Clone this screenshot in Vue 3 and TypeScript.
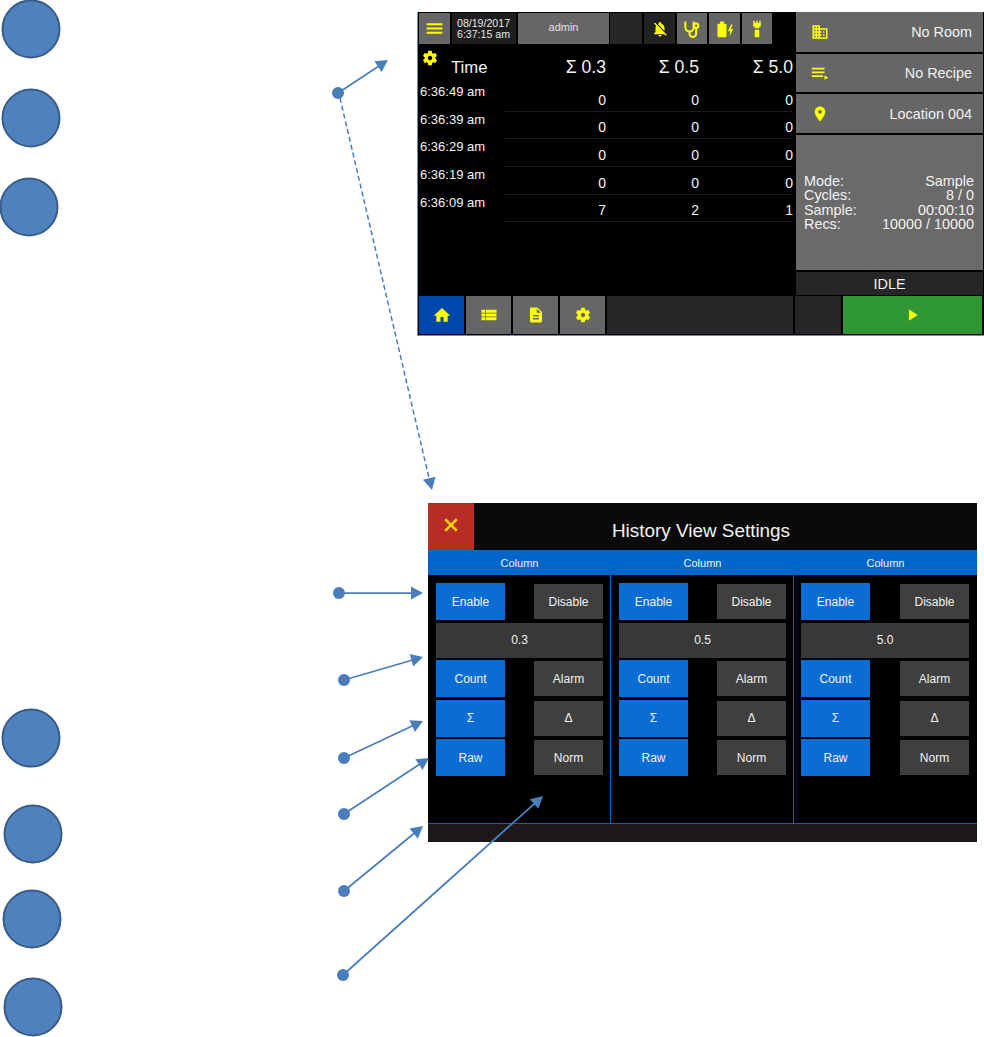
<script setup lang="ts">
type Arrow = { from: [number, number]; to: [number, number] };

const ICONS: Record<string, string> = {
  menu: "M3 18h18v-2.4H3V18zm0-4.8h18v-2.4H3v2.4zM3 6v2.4h18V6H3z",
  gear: "M19.14 12.94c.04-.3.06-.61.06-.94 0-.32-.02-.64-.07-.94l2.03-1.58c.18-.14.23-.41.12-.61l-1.92-3.32c-.12-.22-.37-.29-.59-.22l-2.39.96c-.5-.38-1.03-.7-1.62-.94l-.36-2.54c-.04-.24-.24-.41-.48-.41h-3.84c-.24 0-.43.17-.47.41l-.36 2.54c-.59.24-1.13.57-1.62.94l-2.39-.96c-.22-.08-.47 0-.59.22L2.74 8.87c-.12.21-.08.47.12.61l2.03 1.58c-.05.3-.09.63-.09.94s.02.64.07.94l-2.03 1.58c-.18.14-.23.41-.12.61l1.92 3.32c.12.22.37.29.59.22l2.39-.96c.5.38 1.03.7 1.62.94l.36 2.54c.05.24.24.41.48.41h3.84c.24 0 .44-.17.47-.41l.36-2.54c.59-.24 1.13-.56 1.62-.94l2.39.96c.22.08.47 0 .59-.22l1.92-3.32c.12-.22.07-.47-.12-.61l-2.01-1.58zM12 15c-1.65 0-3-1.35-3-3s1.35-3 3-3 3 1.35 3 3-1.35 3-3 3z",
  bell_off: "M20 18.69L7.84 6.14 5.27 3.49 4 4.76l2.8 2.8v.01c-.52.99-.8 2.16-.8 3.42v5l-2 2v1h13.73l2 2L21 19.72l-1-1.03zM12 22c1.11 0 2-.89 2-2h-4c0 1.11.89 2 2 2zm6-7.32V11c0-3.08-1.64-5.64-4.5-6.32V4c0-.83-.67-1.5-1.5-1.5s-1.5.67-1.5 1.5v.68c-.15.03-.29.08-.42.12-.1.03-.2.07-.3.11h-.01c-.2.08-.4.17-.59.27-.01 0-.01 0-.02.01L18 14.68z",
  battery: "M3 5h2.5V2h5v3H13a1 1 0 0 1 1 1v16a1 1 0 0 1-1 1H3a1 1 0 0 1-1-1V6a1 1 0 0 1 1-1zM20 6l-4 9h3l-1 7 5-10h-3l2-6z",
  torch: "M7 1h2v3h2V1h2v3h2V1h2v8h-2v2H9V9H7zM9 13h6v10H9z",
  building: "M12 7V3H2v18h20V7H12zM6 19H4v-2h2v2zm0-4H4v-2h2v2zm0-4H4V9h2v2zm0-4H4V5h2v2zm4 12H8v-2h2v2zm0-4H8v-2h2v2zm0-4H8V9h2v2zm0-4H8V5h2v2zm10 12h-8v-2h2v-2h-2v-2h2v-2h-2V9h8v10zm-2-8h-2v2h2v-2zm0 4h-2v2h2v-2z",
  recipe: "M1 5h17v2.4H1zM1 10h17v2.4H1zM1 15h15v2.4H1zM18 15l5 3-5 3z",
  pin: "M12 2C8.13 2 5 5.13 5 9c0 5.25 7 13 7 13s7-7.75 7-13c0-3.87-3.13-7-7-7zm0 9.5c-1.38 0-2.5-1.12-2.5-2.5s1.12-2.5 2.5-2.5 2.5 1.12 2.5 2.5-1.12 2.5-2.5 2.5z",
  home: "M10 21v-6.5h4V21h5.5v-8H23L12 2.5 1 13h3.5v8z",
  list: "M2 14h5v-4H2v4zm0 5h5v-4H2v4zM2 9h5V5H2v4zm6 5h14v-4H8v4zm0 5h14v-4H8v4zM8 5v4h14V5H8z",
  file: "M14 2H6c-1.1 0-1.99.9-1.99 2L4 20c0 1.1.89 2 1.99 2H18c1.1 0 2-.9 2-2V8l-6-6zm2 16H8v-2h8v2zm0-4H8v-2h8v2zm-3-5V3.5L18.5 9H13z",
  play: "M5 2l15 10L5 22z",
  close: "M20 6.2L17.8 4 12 9.8 6.2 4 4 6.2 9.8 12 4 17.8 6.2 20 12 14.2 17.8 20 20 17.8 14.2 12z",
};

const top_tiles = [
  { icon: "bell_off", dark: true },
  { icon: "stetho", dark: false },
  { icon: "battery", dark: false },
  { icon: "torch", dark: false },
];

const history = [
  { time: "6:36:49 am", counts: [0, 0, 0] },
  { time: "6:36:39 am", counts: [0, 0, 0] },
  { time: "6:36:29 am", counts: [0, 0, 0] },
  { time: "6:36:19 am", counts: [0, 0, 0] },
  { time: "6:36:09 am", counts: [7, 2, 1] },
];

const side_rows = [
  { icon: "building", label: "No Room" },
  { icon: "recipe", label: "No Recipe" },
  { icon: "pin", label: "Location 004" },
];

const status_rows = [
  ["Mode:", "Sample"],
  ["Cycles:", "8 / 0"],
  ["Sample:", "00:00:10"],
  ["Recs:", "10000 / 10000"],
];

const nav = [
  { icon: "home", active: true },
  { icon: "list", active: false },
  { icon: "file", active: false },
  { icon: "gear", active: false },
];

const columns = ["0.3", "0.5", "5.0"];
const toggle_rows = [
  ["Count", "Alarm"],
  ["Σ", "Δ"],
  ["Raw", "Norm"],
];

const big_circles = [
  [31, 29],
  [31, 118],
  [29, 207],
  [31, 738],
  [33, 834],
  [32, 919],
  [33, 1007],
];

const arrows: Arrow[] = [
  { from: [338, 93], to: [388, 60] },
  { from: [339, 593], to: [423, 593] },
  { from: [344, 680], to: [423, 657] },
  { from: [344, 758], to: [423, 721] },
  { from: [344, 814], to: [429, 758] },
  { from: [344, 891], to: [423, 826] },
  { from: [343, 975], to: [543, 796] },
];

function head(to: [number, number], from: [number, number]) {
  const [x, y] = to;
  const len = Math.hypot(x - from[0], y - from[1]);
  const ux = (x - from[0]) / len;
  const uy = (y - from[1]) / len;
  const bx = x - ux * 12;
  const by = y - uy * 12;
  return `${x},${y} ${bx - uy * 6.5},${by + ux * 6.5} ${bx + uy * 6.5},${by - ux * 6.5}`;
}

function shaft_end(to: [number, number], from: [number, number]) {
  const len = Math.hypot(to[0] - from[0], to[1] - from[1]);
  return {
    x: to[0] - ((to[0] - from[0]) / len) * 9,
    y: to[1] - ((to[1] - from[1]) / len) * 9,
  };
}
</script>

<template>
  <main class="page">
    <section class="screen">
      <div class="screen_main">
        <div class="left_pane">
          <header class="top_bar">
            <div class="tile grey icon_tile">
              <svg class="icon menu_icon" viewBox="0 0 24 24"><path :d="ICONS.menu" /></svg>
            </div>
            <div class="tile date_tile">08/19/2017<br />6:37:15 am</div>
            <div class="tile grey admin_tile">admin</div>
            <div class="tile dark"></div>
            <div
              v-for="tile in top_tiles"
              :key="tile.icon"
              class="tile icon_tile"
              :class="tile.dark ? 'darker' : 'grey'"
            >
              <svg v-if="tile.icon === 'stetho'" class="icon stetho_icon" viewBox="0 0 24 24">
                <path d="M4 3v7a5 5 0 0 0 10 0V3M9 15v2.5a4 4 0 0 0 8 0V11" />
                <circle cx="17" cy="8" r="2.6" />
              </svg>
              <svg v-else class="icon" viewBox="0 0 24 24"><path :d="ICONS[tile.icon]" /></svg>
            </div>
          </header>

          <div class="table_head">
            <svg class="icon head_gear" viewBox="0 0 24 24"><path :d="ICONS.gear" /></svg>
            <span class="time_head">Time</span>
            <span>Σ 0.3</span>
            <span>Σ 0.5</span>
            <span>Σ 5.0</span>
          </div>
          <div v-for="row in history" :key="row.time" class="table_row">
            <span class="time_cell">{{ row.time }}</span>
            <span v-for="(count, i) in row.counts" :key="i" class="count_cell">{{ count }}</span>
          </div>
        </div>

        <aside class="side_pane">
          <div v-for="row in side_rows" :key="row.label" class="side_row">
            <svg class="icon" viewBox="0 0 24 24"><path :d="ICONS[row.icon]" /></svg>
            <span>{{ row.label }}</span>
          </div>
          <div class="status_box">
            <div v-for="row in status_rows" :key="row[0]" class="status_row">
              <span>{{ row[0] }}</span>
              <span>{{ row[1] }}</span>
            </div>
          </div>
          <div class="idle_bar">IDLE</div>
        </aside>
      </div>

      <nav class="bottom_bar">
        <div
          v-for="item in nav"
          :key="item.icon"
          class="tile icon_tile"
          :class="item.active ? 'active' : 'grey'"
        >
          <svg class="icon" viewBox="0 0 24 24"><path :d="ICONS[item.icon]" /></svg>
        </div>
        <div class="tile dark"></div>
        <div class="tile dark"></div>
        <div class="tile icon_tile start_tile">
          <svg class="icon play_icon" viewBox="0 0 24 24"><path :d="ICONS.play" /></svg>
        </div>
      </nav>
    </section>

    <section class="settings">
      <header class="settings_title">
        <div class="close_tile">
          <svg class="icon close_icon" viewBox="0 0 24 24"><path :d="ICONS.close" /></svg>
        </div>
        <h1>History View Settings</h1>
      </header>
      <div class="column_heads">
        <span v-for="col in columns" :key="col">Column</span>
      </div>
      <div class="columns">
        <div v-for="col in columns" :key="col" class="column">
          <div class="toggle_row">
            <button class="on" type="button">Enable</button>
            <button class="off" type="button">Disable</button>
          </div>
          <div class="value_field">{{ col }}</div>
          <div v-for="row in toggle_rows" :key="row[0]" class="toggle_row">
            <button class="on" type="button">{{ row[0] }}</button>
            <button class="off" type="button">{{ row[1] }}</button>
          </div>
        </div>
      </div>
      <footer class="settings_foot"></footer>
    </section>

    <svg class="markup" width="984" height="1037" viewBox="0 0 984 1037">
      <circle
        v-for="c in big_circles"
        :key="c[1]"
        class="big_circle"
        :cx="c[0]"
        :cy="c[1]"
        r="28.5"
      />
      <line class="dashed" x1="340" y1="98" x2="429" y2="478" />
      <polygon class="arrow_fill" :points="head([432, 490], [340, 98])" />
      <g v-for="a in arrows" :key="a.from[1]">
        <line
          class="arrow_line"
          :x1="a.from[0]"
          :y1="a.from[1]"
          :x2="shaft_end(a.to, a.from).x"
          :y2="shaft_end(a.to, a.from).y"
        />
        <polygon class="arrow_fill" :points="head(a.to, a.from)" />
        <circle class="arrow_fill" :cx="a.from[0]" :cy="a.from[1]" r="6" />
      </g>
    </svg>
  </main>
</template>

<style>
html,
body {
  margin: 0;
  background: #ffffff;
}
</style>

<style scoped>
.page {
  position: relative;
  width: 984px;
  height: 1037px;
  overflow: hidden;
  background: #ffffff;
  color: #f2f2f2;
  font-family: "Liberation Sans", Arial, sans-serif;
}

.icon {
  display: block;
  width: 18px;
  height: 18px;
  fill: #ffff00;
}

/* the two captured device screens sit freely on the page */
.screen {
  position: absolute;
  left: 417px;
  top: 12px;
  box-sizing: border-box;
  display: grid;
  grid-template-rows: 284px 38px;
  width: 567px;
  height: 324px;
  border-left: 1px solid #6f8fa8;
  border-bottom: 1px solid #6f8fa8;
  padding-left: 1px;
  background: #000000;
}

.screen_main {
  display: grid;
  grid-template-columns: 377px 187px;
}

.tile {
  min-width: 0;
}

.grey {
  background: #666666;
}

.dark {
  background: #272727;
}

.darker {
  background: #222222;
}

.active {
  background: #0047ab;
}

.icon_tile {
  display: grid;
  place-items: center;
}

.top_bar {
  display: grid;
  grid-template-columns: 31px 64px 91px 31px 31px 30px 31px 30px;
  gap: 2px;
  height: 31px;
  margin-top: 1px;
}

.top_bar .tile:nth-child(4) {
  margin-left: -1px;
}

.top_bar .icon {
  width: 18px;
  height: 18px;
}

.top_bar .menu_icon {
  width: 21px;
  height: 21px;
}

.top_bar .stetho_icon {
  width: 20px;
  height: 20px;
  fill: none;
  stroke: #ffff00;
  stroke-width: 2.4;
}

.date_tile {
  padding: 5px 0 0 5px;
  background: #1e1e1e;
  font-size: 10.6px;
  line-height: 10.5px;
  color: #e8e8e8;
}

.admin_tile {
  display: grid;
  place-items: center;
  padding-bottom: 4px;
  box-sizing: border-box;
  font-size: 11px;
  color: #e0e0e0;
}

.table_head,
.table_row {
  display: grid;
  grid-template-columns: 86px 101px 93px 94px;
  width: 376px;
}

.table_head {
  position: relative;
  align-items: center;
  height: 40px;
  padding-top: 7px;
  box-sizing: border-box;
  text-align: right;
  font-size: 17.6px;
}

.time_head {
  padding-left: 32px;
  text-align: left;
  font-size: 16.7px;
}

.head_gear {
  position: absolute;
  left: 2px;
  top: 5px;
}

.table_row {
  height: 27.7px;
  box-sizing: border-box;
}

.time_cell {
  grid-column: 1;
  padding: 1px 0 0 1px;
  font-size: 13px;
  line-height: 14px;
  white-space: nowrap;
}

.count_cell {
  display: flex;
  align-items: flex-end;
  justify-content: flex-end;
  border-bottom: 1px solid #1b1b1b;
  padding-bottom: 3px;
  font-size: 14px;
  line-height: 16px;
}

.side_pane {
  display: grid;
  grid-template-rows: 40px 38px 39px 135px 23px;
  gap: 2px;
}

.side_row {
  display: flex;
  align-items: center;
  justify-content: space-between;
  padding: 0 11px 0 15px;
  background: #666666;
  font-size: 14.4px;
}

.status_box {
  display: flex;
  flex-direction: column;
  justify-content: center;
  padding: 0 9px 0 8px;
  background: #6a6a6a;
  font-size: 14.4px;
  line-height: 14.5px;
}

.status_row {
  display: flex;
  justify-content: space-between;
}

.idle_bar {
  display: grid;
  place-items: center;
  background: #262626;
  font-size: 14.4px;
}

.bottom_bar {
  display: grid;
  grid-template-columns: 45px 45px 45px 45px 186px 46px 139px;
  gap: 2px;
}

.start_tile {
  background: #2e9632;
}

.play_icon {
  width: 14px;
  height: 14px;
}

.settings {
  position: absolute;
  left: 428px;
  top: 503px;
  display: grid;
  grid-template-rows: 47px 25px 1fr 18px;
  width: 549px;
  height: 339px;
  background: #000000;
}

.settings_title {
  display: grid;
  grid-template-columns: 46px 1fr;
  align-items: center;
  background: #0a0a0a;
}

.close_tile {
  display: grid;
  place-items: center;
  height: 100%;
  padding-bottom: 3px;
  box-sizing: border-box;
  background: #b92c26;
}

.close_icon {
  fill: #ffd400;
  width: 20px;
  height: 20px;
}

.settings_title h1 {
  margin: 0;
  padding: 9px 49px 0 0;
  text-align: center;
  font-size: 18.9px;
  font-weight: 400;
}

.column_heads {
  display: grid;
  grid-template-columns: repeat(3, 183px);
  align-items: center;
  background: #0066cc;
  text-align: center;
  font-size: 11px;
}

.columns {
  display: grid;
  grid-template-columns: repeat(3, 183px);
  border-bottom: 1px solid #0a66b0;
}

.column {
  display: flex;
  flex-direction: column;
  gap: 2.5px;
  box-sizing: border-box;
  border-right: 1px solid #0a66b0;
  padding: 8px 7px 0 8px;
}

.column:last-child {
  border-right: 0;
  padding: 8px 8px 0 7px;
}

.toggle_row {
  display: flex;
  align-items: center;
  justify-content: space-between;
  height: 37px;
}

.toggle_row button {
  width: 69px;
  border: 0;
  padding: 0;
  color: #f2f2f2;
  font: inherit;
  font-size: 12px;
}

.on {
  height: 37px;
  background: #0a6dd4;
}

.off {
  height: 35px;
  background: #3f3f3f;
}

.value_field {
  display: grid;
  place-items: center;
  height: 35px;
  background: #383838;
  font-size: 12px;
}

.settings_foot {
  background: #1c1818;
}

/* callout circles, dots and arrows drawn over everything */
.markup {
  position: absolute;
  left: 0;
  top: 0;
  pointer-events: none;
}

.big_circle {
  fill: #4f81bd;
  stroke: #385d8a;
  stroke-width: 2;
}

.arrow_line {
  stroke: #4a7ebb;
  stroke-width: 1.75;
}

.arrow_fill {
  fill: #4a7ebb;
}

.dashed {
  stroke: #4a7ebb;
  stroke-width: 1.5;
  stroke-dasharray: 5 3;
}
</style>
